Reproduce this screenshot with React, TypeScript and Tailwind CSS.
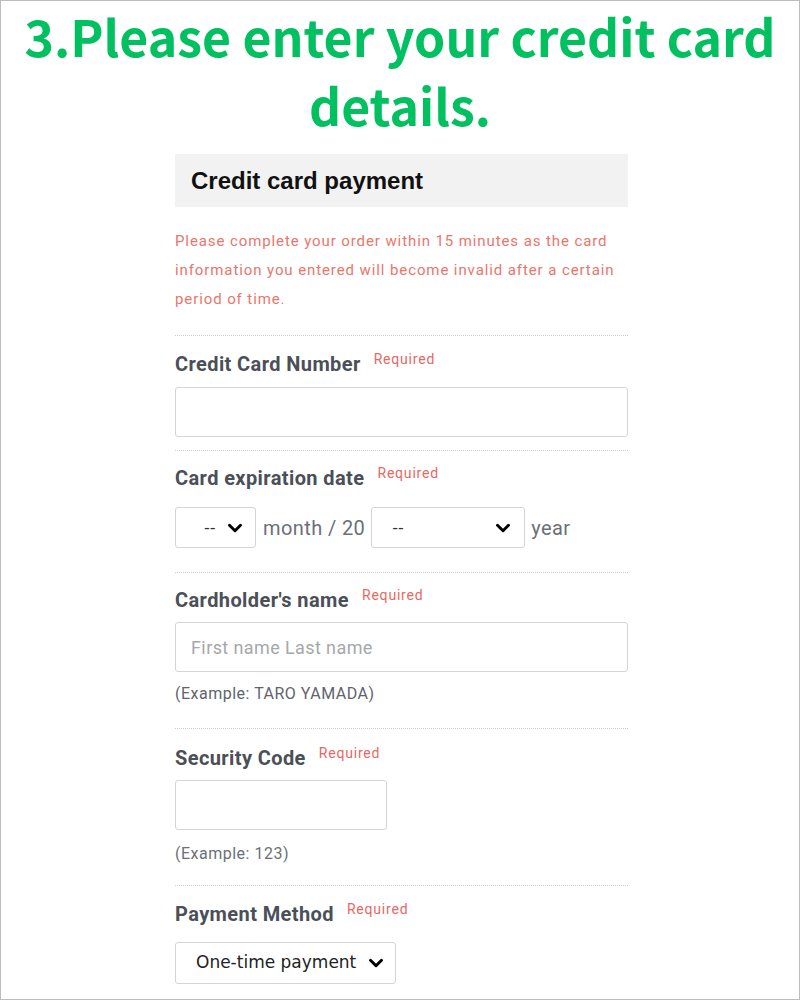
import { ChevronDown } from "lucide-react"

const sans = "font-['Roboto','Liberation_Sans',sans-serif]"

function Required() {
  return <span className="ml-[13px] relative -top-[7px] text-[14px] text-[#e8675f] font-normal tracking-[0.8px]">Required</span>
}

function FieldLabel({ children }: { children: string }) {
  return (
    <div className="flex items-baseline h-[24px] leading-[24px]">
      <span className="text-[20px] font-bold text-[#4b4f58] tracking-[0.4px]">{children}</span>
      <Required />
    </div>
  )
}

function Divider() {
  return <div className="border-t border-dotted border-[#cfcfcf]" />
}

function SelectBox({ value, className }: { value: string; className: string }) {
  return (
    <div className={`h-[41px] border border-[#d4d4d4] rounded-[3px] bg-white flex items-center justify-between ${className}`}>
      <span className="text-[16px] text-[#333] font-['DejaVu_Sans',sans-serif]">{value}</span>
      <ChevronDown className="w-[22px] h-[22px] text-black" strokeWidth={3.2} />
    </div>
  )
}

export default function App() {
  return (
    <div className={`w-[800px] h-[1000px] border border-[#bdbdbd] bg-white overflow-hidden ${sans}`}>
      <h1 className="text-center font-['Noto_Sans_CJK_JP',sans-serif] font-bold text-[50px] leading-[69px] text-[#00c060]">
        <div>3.Please enter your credit card</div>
        <div>details.</div>
      </h1>

      <div className="ml-[174px] mt-[15px] w-[453px]">
        <div className="h-[53px] bg-[#f2f2f2] flex items-center pl-[16px]">
          <span className="text-[24px] font-bold text-[#111] font-['Liberation_Sans',sans-serif]">Credit card payment</span>
        </div>

        <p className="mt-[20px] text-[15px] leading-[29px] text-[#eb756c] tracking-[0.9px]">
          Please complete your order within 15 minutes as the card information you entered will become invalid after a certain period of time.
        </p>

        <div className="mt-[21px]">
          <Divider />
        </div>

        <div className="pt-[16px] pb-[13px]">
          <FieldLabel>Credit Card Number</FieldLabel>
          <div className="mt-[11px] h-[50px] border border-[#d4d4d4] rounded-[3px]" />
        </div>
        <Divider />

        <div className="pt-[15px] pb-[24px]">
          <FieldLabel>Card expiration date</FieldLabel>
          <div className="mt-[17px] flex items-center">
            <SelectBox value="--" className="w-[81px] pl-[28px] pr-[9px]" />
            <span className="ml-[7px] text-[20px] text-[#6b6f78] tracking-[0.4px]">month / 20</span>
            <SelectBox value="--" className="ml-[6px] w-[154px] pl-[20px] pr-[10px]" />
            <span className="ml-[6px] text-[20px] text-[#6b6f78] tracking-[0.4px]">year</span>
          </div>
        </div>
        <Divider />

        <div className="pt-[15px] pb-[24px]">
          <FieldLabel>Cardholder's name</FieldLabel>
          <div className="mt-[10px] h-[50px] border border-[#d4d4d4] rounded-[3px] flex items-center pl-[15px]">
            <span className="text-[18px] text-[#a5a7ab] tracking-[0.4px]">First name Last name</span>
          </div>
          <div className="mt-[12px] h-[20px] leading-[20px] text-[16px] text-[#5f636b] tracking-[0.5px]">(Example: TARO YAMADA)</div>
        </div>
        <Divider />

        <div className="pt-[17px] pb-[21px]">
          <FieldLabel>Security Code</FieldLabel>
          <div className="mt-[10px] w-[212px] h-[50px] border border-[#d4d4d4] rounded-[3px]" />
          <div className="mt-[14px] h-[20px] leading-[20px] text-[16px] text-[#6b6f78] tracking-[0.5px]">(Example: 123)</div>
        </div>
        <Divider />

        <div className="pt-[16px]">
          <FieldLabel>Payment Method</FieldLabel>
          <div className="mt-[16px] w-[221px] h-[42px] border border-[#d4d4d4] rounded-[3px] flex items-center justify-between pl-[20px] pr-[8px]">
            <span className="text-[17px] text-[#222] font-['DejaVu_Sans',sans-serif]">One-time payment</span>
            <ChevronDown className="w-[22px] h-[22px] text-black" strokeWidth={3.2} />
          </div>
        </div>
      </div>
    </div>
  )
}
